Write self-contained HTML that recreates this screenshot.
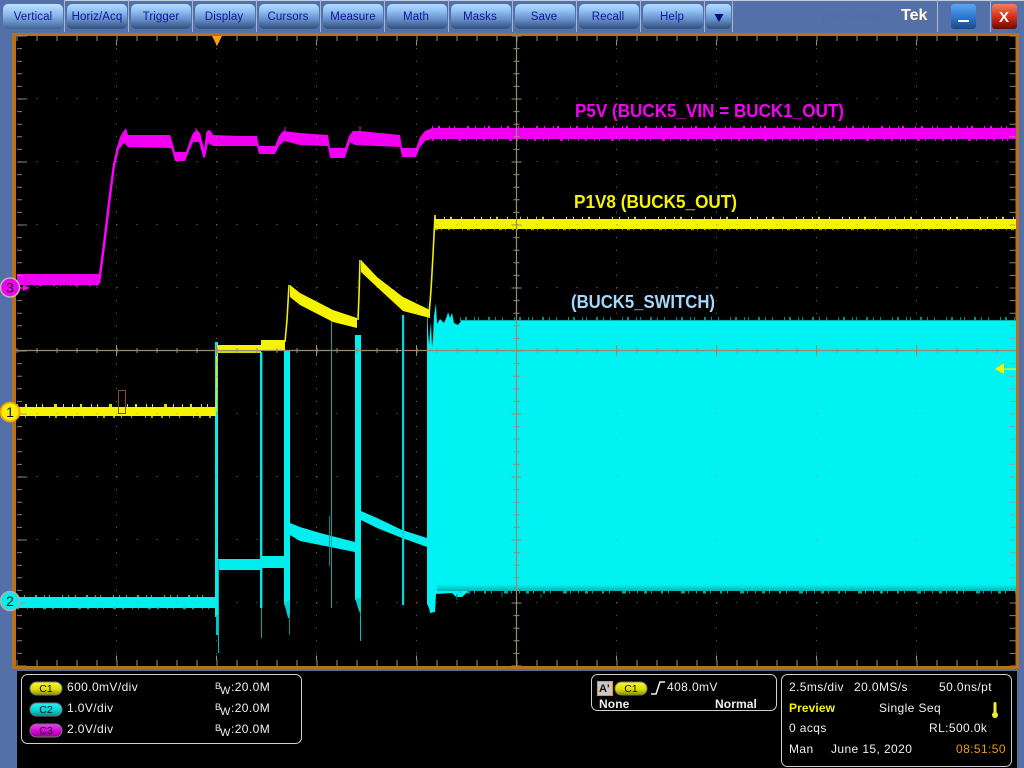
<!DOCTYPE html>
<html><head><meta charset="utf-8"><title>Tek</title>
<style>
html,body{margin:0;padding:0;background:#000;width:1024px;height:768px;overflow:hidden}
svg{display:block;position:absolute;left:0;top:0}
text{font-family:"Liberation Sans",sans-serif}
.t{font-size:12px;fill:#f0f0f0;letter-spacing:.4px}
.b{font-size:11.5px;fill:#14149a;text-anchor:middle;letter-spacing:.1px}
.c{font-size:10.5px;fill:#111;text-anchor:middle}
</style></head><body>
<svg width="1024" height="768" viewBox="0 0 1024 768" xmlns="http://www.w3.org/2000/svg">
<defs>
<linearGradient id="btn" x1="0" y1="0" x2="0" y2="1"><stop offset="0" stop-color="#b4dcff"/><stop offset=".25" stop-color="#94c4f6"/><stop offset=".6" stop-color="#6892cc"/><stop offset=".88" stop-color="#3f6292"/><stop offset="1" stop-color="#34507c"/></linearGradient>
<linearGradient id="btn0" x1="0" y1="0" x2="0" y2="1"><stop offset="0" stop-color="#bce2ff"/><stop offset=".45" stop-color="#8ab8ec"/><stop offset=".88" stop-color="#5078aa"/><stop offset="1" stop-color="#42628e"/></linearGradient>
<linearGradient id="mn" x1="0" y1="0" x2="0" y2="1"><stop offset="0" stop-color="#58a8f4"/><stop offset=".55" stop-color="#2c74cc"/><stop offset="1" stop-color="#1c4684"/></linearGradient>
<linearGradient id="cl" x1="0" y1="0" x2="0" y2="1"><stop offset="0" stop-color="#f08060"/><stop offset=".5" stop-color="#d83018"/><stop offset="1" stop-color="#700800"/></linearGradient>
<linearGradient id="cy" x1="0" y1="0" x2="0" y2="1"><stop offset="0" stop-color="#fafa30"/><stop offset=".6" stop-color="#d8d800"/><stop offset="1" stop-color="#8a8a00"/></linearGradient>
<linearGradient id="cc" x1="0" y1="0" x2="0" y2="1"><stop offset="0" stop-color="#30f0f0"/><stop offset=".6" stop-color="#00d0d0"/><stop offset="1" stop-color="#008a8a"/></linearGradient>
<linearGradient id="cm" x1="0" y1="0" x2="0" y2="1"><stop offset="0" stop-color="#f040f0"/><stop offset=".6" stop-color="#d000d0"/><stop offset="1" stop-color="#880088"/></linearGradient>
<linearGradient id="edge" x1="0" y1="0" x2="0" y2="1"><stop offset="0" stop-color="#00f5f5"/><stop offset="1" stop-color="#00b4b4"/></linearGradient>
</defs>

<!-- chrome -->
<rect width="1024" height="768" fill="#5470a8"/>
<rect x="64" y="0" width="960" height="1" fill="#c4cede"/>
<g fill="#a8b6d0">
<rect x="64" y="0" width="1" height="32"/><rect x="128" y="0" width="1" height="32"/><rect x="192" y="0" width="1" height="32"/><rect x="256" y="0" width="1" height="32"/><rect x="320" y="0" width="1" height="32"/><rect x="384" y="0" width="1" height="32"/><rect x="448" y="0" width="1" height="32"/><rect x="512" y="0" width="1" height="32"/><rect x="576" y="0" width="1" height="32"/><rect x="640" y="0" width="1" height="32"/><rect x="704" y="0" width="1" height="32"/><rect x="732" y="0" width="1" height="32"/><rect x="937" y="0" width="1" height="32"/><rect x="990" y="0" width="1" height="32"/>
</g>
<rect x="3" y="4" width="60" height="25" rx="5" fill="url(#btn0)"/>
<g fill="url(#btn)">
<rect x="67" y="4" width="60" height="25" rx="5"/><rect x="131" y="4" width="60" height="25" rx="5"/><rect x="195" y="4" width="60" height="25" rx="5"/><rect x="259" y="4" width="60" height="25" rx="5"/><rect x="323" y="4" width="60" height="25" rx="5"/><rect x="387" y="4" width="60" height="25" rx="5"/><rect x="451" y="4" width="60" height="25" rx="5"/><rect x="515" y="4" width="60" height="25" rx="5"/><rect x="579" y="4" width="60" height="25" rx="5"/><rect x="643" y="4" width="60" height="25" rx="5"/><rect x="706" y="4" width="25" height="25" rx="4"/>
</g>
<text class="b" x="33" y="20">Vertical</text>
<text class="b" x="97" y="20">Horiz/Acq</text>
<text class="b" x="161" y="20">Trigger</text>
<text class="b" x="224" y="20">Display</text>
<text class="b" x="288" y="20">Cursors</text>
<text class="b" x="353" y="20">Measure</text>
<text class="b" x="416" y="20">Math</text>
<text class="b" x="480" y="20">Masks</text>
<text class="b" x="544" y="20">Save</text>
<text class="b" x="608" y="20">Recall</text>
<text class="b" x="672" y="20">Help</text>
<path d="M714.5 14H723.5L719 22Z" fill="#0c0c80"/>
<text x="822" y="21" font-size="11.5" fill="#516da5" letter-spacing=".4">DPO5204B</text>
<text x="902" y="21" font-size="16" font-weight="bold" fill="#6b6b6b">Tek</text>
<text x="901" y="20" font-size="16" font-weight="bold" fill="#fff">Tek</text>
<rect x="951" y="4" width="25" height="25" rx="3" fill="url(#mn)"/>
<rect x="958" y="20" width="11" height="2" fill="#fff"/>
<rect x="992" y="4" width="25" height="25" rx="3" fill="url(#cl)"/>
<text x="999" y="22" font-size="15" font-weight="bold" fill="#fff">X</text>

<!-- lower black area + frame -->
<rect x="17" y="671" width="1000" height="97" fill="#000"/>
<rect x="12" y="33" width="1007" height="636" fill="#b8701c"/>
<rect x="16" y="36" width="999.5" height="630" fill="#000"/>

<!-- magenta -->
<g fill="none" stroke-linejoin="round">
<rect x="17" y="274" width="82" height="11" fill="#f000f0"/>
<path d="M17 285.5H99" stroke="#e000e0" stroke-width="1.5" stroke-dasharray="2 5 1 9 1 4 3 11"/>
<path d="M99 283L104 245L110 195L114 165L118 148L122 140" stroke="#ff00ff" stroke-width="2.5"/>
<path d="M116 150L120 137L123 132L126 128L128 135L170 135L173 144L175 152L186 152L189 143L193 133L197 130L200 133L203 144L204.5 148L206 133L208 130L211 131L213 135L240 136L257 136L259 146L275 146L279 136L283 131L300 133L328 135L330 148L345 148L349 136L353 131L360 131L400 135L402 148L416 148L420 137L425 131L430 129L432 128L1016 128L1016 139L432 139L425 141L420 147L416 157L402 157L400 147L355 145L350 142L345 158L330 158L328 146L300 145L284 141L279 146L275 154L259 154L257 146L213 146L208 143L205 158L203 157L199 142L193 142L189 151L185 161L175 161L172 150L170 148L128 147L124 143L120 148Z" fill="#f200f2"/>
<path d="M432 127L1016 127" stroke="#ff00ff" stroke-width="2" stroke-dasharray="1 5 2 9 1 4 1 12 2 6 1 8 1 3 2 11"/>
<path d="M432 140L1016 140" stroke="#d000d0" stroke-width="2" stroke-dasharray="2 7 1 4 1 11 3 5 1 9 1 6"/>
<path d="M360 126V132M285 127V132M196 128V132" stroke="#f000f0" stroke-width="1"/>
</g>

<!-- cyan -->
<g fill="none" stroke-linejoin="round">
<rect x="17" y="597" width="199" height="11" fill="#00f0f0"/>
<path d="M17 596L216 596" stroke="#00c0c0" stroke-width="2" stroke-dasharray="1 6 1 10 2 7 1 4 1 12 1 5"/>
<path d="M17 608.5L216 608.5" stroke="#00a8a8" stroke-width="1.5" stroke-dasharray="2 8 1 5 1 9 3 6"/>
<rect x="218" y="559" width="42" height="11" fill="#00eeee"/>
<rect x="261" y="556" width="24" height="12" fill="#00eeee"/>
<path d="M290 523L300 527L320 533L355 542L355 552L320 545L300 541L290 535Z" fill="#00eeee"/>
<path d="M361 511L377 518L402 530L427 538L427 547L402 538L377 528L361 520Z" fill="#00eeee"/>
<rect x="215" y="342" width="3" height="275" fill="#00f0f0"/>
<rect x="216" y="615" width="2" height="20" fill="#00c8c8"/>
<rect x="218" y="560" width="1" height="93" fill="#00b8b8"/>
<rect x="260" y="352" width="2.4" height="256" fill="#00e8e8"/>
<rect x="261" y="608" width="1" height="30" fill="#00a8a8"/>
<rect x="284" y="350" width="6" height="255" fill="#00f0f0"/>
<path d="M284 603L286 610L288 618L290 618L290 600Z" fill="#00d0d0"/>
<rect x="289" y="615" width="1" height="20" fill="#008c8c"/>
<rect x="331" y="319" width="1" height="289" fill="#00a8a8"/>
<rect x="329" y="516" width="1" height="50" fill="#008888"/>
<rect x="355" y="335" width="6" height="265" fill="#00f0f0"/>
<path d="M355 598L358 608L361 616L361 598Z" fill="#00d0d0"/>
<rect x="360" y="615" width="1" height="26" fill="#00c0c0"/>
<rect x="402" y="315" width="2.2" height="290" fill="#00dcdc"/>
<path d="M427 300L428 330L429 345L431 322L432 347L433 338L434 316L436 303L437 324L440 319L444 323L447 316L448 312L450 318L452 313L454 323L458 325L462 320L1016 320L1016 590L470 590L462 597L456 597L452 593L436 594L435 612L430 613L429 608L427 604Z" fill="#00f3f3"/>
<rect x="437" y="584" width="579" height="7" fill="url(#edge)"/>
<path d="M460 592L1016 592" stroke="#00a8a8" stroke-width="3" stroke-dasharray="1 6 3 4 1 9 2 5 1 12 4 3 1 7"/>
<path d="M460 318.5L1016 318.5" stroke="#008c8c" stroke-width="3" stroke-dasharray="1 4 2 7 1 3 1 9 2 5 1 6 1 11"/>
<path d="M460 320.5L1016 320.5" stroke="#00b4b4" stroke-width="1"/>
<path d="M541 594L541 598M502 592L502 597M457 594L457 600" stroke="#007878" stroke-width="1"/>
</g>

<!-- yellow -->
<g fill="none" stroke-linejoin="round">
<rect x="17" y="407" width="199" height="9" fill="#f4f400"/>
<path d="M17 405.5L216 405.5" stroke="#e0e000" stroke-width="3" stroke-dasharray="1 7 2 9 1 5 1 11 3 6 1 8"/>
<path d="M17 417L216 417" stroke="#a8a800" stroke-width="2" stroke-dasharray="2 6 1 9 1 13 1 5 2 8"/>
<path d="M216 411L216.5 385L217 345" stroke="#e8e800" stroke-width="1.6"/>
<rect x="218" y="345" width="43" height="8" fill="#d8d800"/>
<rect x="218" y="345" width="43" height="5" fill="#f4f400"/>
<rect x="261" y="340" width="24" height="10" fill="#f4f400"/>
<path d="M285 342L287 320L289 285" stroke="#f0f000" stroke-width="1.6"/>
<path d="M290 285L300 293L333 310L357 318L357 328L333 322L300 305L290 297Z" fill="#f4f400"/>
<path d="M358 320L359 295L360 260" stroke="#f0f000" stroke-width="1.6"/>
<path d="M361 260L377 277L403 297L430 310L430 318L403 311L377 287L361 272Z" fill="#f4f400"/>
<path d="M429 315L431 290L433 255L435 215" stroke="#f0f000" stroke-width="1.6"/>
<rect x="435" y="219" width="581" height="10" fill="#f4f400"/>
<path d="M435 218L1016 218" stroke="#d4d400" stroke-width="2.5" stroke-dasharray="1 8 1 5 2 9 1 12 1 6"/>
<path d="M435 229.5L1016 229.5" stroke="#989800" stroke-width="1.5" stroke-dasharray="3 3 1 6 2 3 1 8 1 4"/>
</g>

<!-- graticule -->
<g fill="none">
<path d="M16 38.5H1016" stroke="#b0a890" stroke-width="5" stroke-dasharray="1 19" stroke-dashoffset="-0.5" opacity=".85"/>
<path d="M116 43H1016" stroke="#b0a890" stroke-width="5" stroke-dasharray="1 99" opacity=".85"/>
<path d="M16 663H1016" stroke="#b0a890" stroke-width="6" stroke-dasharray="1 19" stroke-dashoffset="-0.5" opacity=".85"/>
<path d="M116 658H1016" stroke="#b0a890" stroke-width="5" stroke-dasharray="1 99" opacity=".85"/>
<path d="M19.5 35.5V666" stroke="#a09880" stroke-width="5" stroke-dasharray="1 11.6" opacity=".85"/>
<path d="M23 35.5V666" stroke="#a09880" stroke-width="8" stroke-dasharray="1 62" opacity=".85"/>
<path d="M1012.5 35.5V666" stroke="#a09880" stroke-width="6" stroke-dasharray="1 11.6" opacity=".85"/>
<path d="M116.5 48V656M216.5 48V656M316.5 48V656M416.5 48V656M616.5 48V656M716.5 48V656M816.5 48V656M916.5 48V656" stroke="#a09880" stroke-width="1" stroke-dasharray="1 11.6" stroke-dashoffset="-0.1" opacity=".7"/>
<path d="M27 98.5H1010M27 161.5H1010M27 224.5H1010M27 287.5H1010M27 413.5H1010M27 476.5H1010M27 539.5H1010M27 602.5H1010" stroke="#a09880" stroke-width="1" stroke-dasharray="1 19" stroke-dashoffset="-9.5" opacity=".7"/>
<path d="M16 350.5H1016M516.5 36V666" stroke="#998a72" stroke-width="1.2"/>
<path d="M16 350.5H1016" stroke="#a08a70" stroke-width="5" stroke-dasharray="1 19" stroke-dashoffset="-0.5"/>
<path d="M116 350.5H1016" stroke="#a08a70" stroke-width="11" stroke-dasharray="1 99"/>
<path d="M516.5 35.5V666" stroke="#998a72" stroke-width="6" stroke-dasharray="1 11.6"/>
<path d="M516.5 35.5V666" stroke="#998a72" stroke-width="10" stroke-dasharray="1 62"/>
</g>

<rect x="118.5" y="390.5" width="7" height="23" fill="none" stroke="#8c4a20" stroke-width="1"/>
<path d="M212 36H222L217 46Z" fill="#f8a010"/>
<path d="M1004 363V374L995 369Z" fill="#f4f400"/>
<rect x="1004" y="368.5" width="12" height="1.2" fill="#f4f400"/>

<!-- channel markers -->
<path d="M18 288L26 288" stroke="#ff00ff" stroke-width="1.5"/><path d="M23 285V291L30 288Z" fill="#ff00ff"/>
<circle cx="10" cy="287.5" r="9.5" fill="#f000f0" stroke="#b8b8b8" stroke-width="1.5"/>
<text x="10" y="292.5" font-size="14" fill="#111" text-anchor="middle">3</text>
<circle cx="10" cy="412" r="9.5" fill="#fff000" stroke="#f0a000" stroke-width="1.8"/>
<text x="10" y="417" font-size="14" fill="#111" text-anchor="middle">1</text>
<circle cx="10" cy="601" r="9.5" fill="#00f0f0" stroke="#b0b0b0" stroke-width="1.5"/>
<text x="10" y="606" font-size="14" fill="#111" text-anchor="middle">2</text>

<!-- labels -->
<text x="575" y="117" font-size="18.5" font-weight="bold" fill="#f400f4" textLength="269" lengthAdjust="spacingAndGlyphs">P5V (BUCK5_VIN = BUCK1_OUT)</text>
<text x="574" y="208" font-size="18.5" font-weight="bold" fill="#f4f400" textLength="163" lengthAdjust="spacingAndGlyphs">P1V8 (BUCK5_OUT)</text>
<text x="571" y="308" font-size="18.5" font-weight="bold" fill="#a4d8fc" textLength="144" lengthAdjust="spacingAndGlyphs">(BUCK5_SWITCH)</text>

<!-- info boxes -->
<g fill="none" stroke="#d0d0d0" stroke-width="1">
<rect x="21.5" y="674.5" width="280" height="69" rx="6"/>
<rect x="591.5" y="674.5" width="185" height="36" rx="6"/>
<rect x="781.5" y="674.5" width="230" height="92" rx="6"/>
</g>
<rect x="30" y="682" width="32" height="13" rx="6.5" fill="url(#cy)" stroke="#777"/>
<rect x="30" y="703" width="32" height="13" rx="6.5" fill="url(#cc)" stroke="#777"/>
<rect x="30" y="724" width="32" height="13" rx="6.5" fill="url(#cm)" stroke="#777"/>
<text class="c" x="46" y="692">C1</text><text class="c" x="46" y="713">C2</text><text class="c" x="46" y="734">C3</text>
<text class="t" x="67" y="691">600.0mV/div</text>
<text class="t" x="67" y="712">1.0V/div</text>
<text class="t" x="67" y="733">2.0V/div</text>
<text x="215" y="689" font-size="9" fill="#f0f0f0">B</text><text x="220" y="694" font-size="11" fill="#f0f0f0">W</text><text class="t" x="231" y="691">:20.0M</text>
<text x="215" y="710" font-size="9" fill="#f0f0f0">B</text><text x="220" y="715" font-size="11" fill="#f0f0f0">W</text><text class="t" x="231" y="712">:20.0M</text>
<text x="215" y="731" font-size="9" fill="#f0f0f0">B</text><text x="220" y="736" font-size="11" fill="#f0f0f0">W</text><text class="t" x="231" y="733">:20.0M</text>

<rect x="597.5" y="681.5" width="15" height="14" fill="#c8c8c8" stroke="#f09020"/>
<text x="599" y="692" font-size="11" font-weight="bold" fill="#111">A'</text>
<rect x="615" y="682" width="32" height="13" rx="6.5" fill="url(#cy)" stroke="#777"/>
<text class="c" x="631" y="692">C1</text>
<path d="M651 694H656L660 682H665" fill="none" stroke="#f0f0f0" stroke-width="1.5"/>
<text class="t" x="667" y="691">408.0mV</text>
<text class="t" x="599" y="708" font-weight="bold" style="letter-spacing:.1px">None</text>
<text class="t" x="715" y="708" font-weight="bold" style="letter-spacing:.1px">Normal</text>

<text class="t" x="789" y="691">2.5ms/div</text>
<text class="t" x="854" y="691">20.0MS/s</text>
<text class="t" x="939" y="691">50.0ns/pt</text>
<text class="t" x="789" y="712" style="fill:#f4f400;letter-spacing:.1px" font-weight="bold">Preview</text>
<text class="t" x="879" y="712">Single Seq</text>
<rect x="993.5" y="702" width="3" height="12" rx="1.5" fill="#f4e830"/>
<circle cx="995" cy="715" r="3" fill="#f4e830"/>
<text class="t" x="789" y="732">0 acqs</text>
<text class="t" x="929" y="732">RL:500.0k</text>
<text class="t" x="789" y="753">Man</text>
<text class="t" x="831" y="753">June 15, 2020</text>
<text class="t" x="956" y="753" style="fill:#f09a10">08:51:50</text>
</svg>
</body></html>
